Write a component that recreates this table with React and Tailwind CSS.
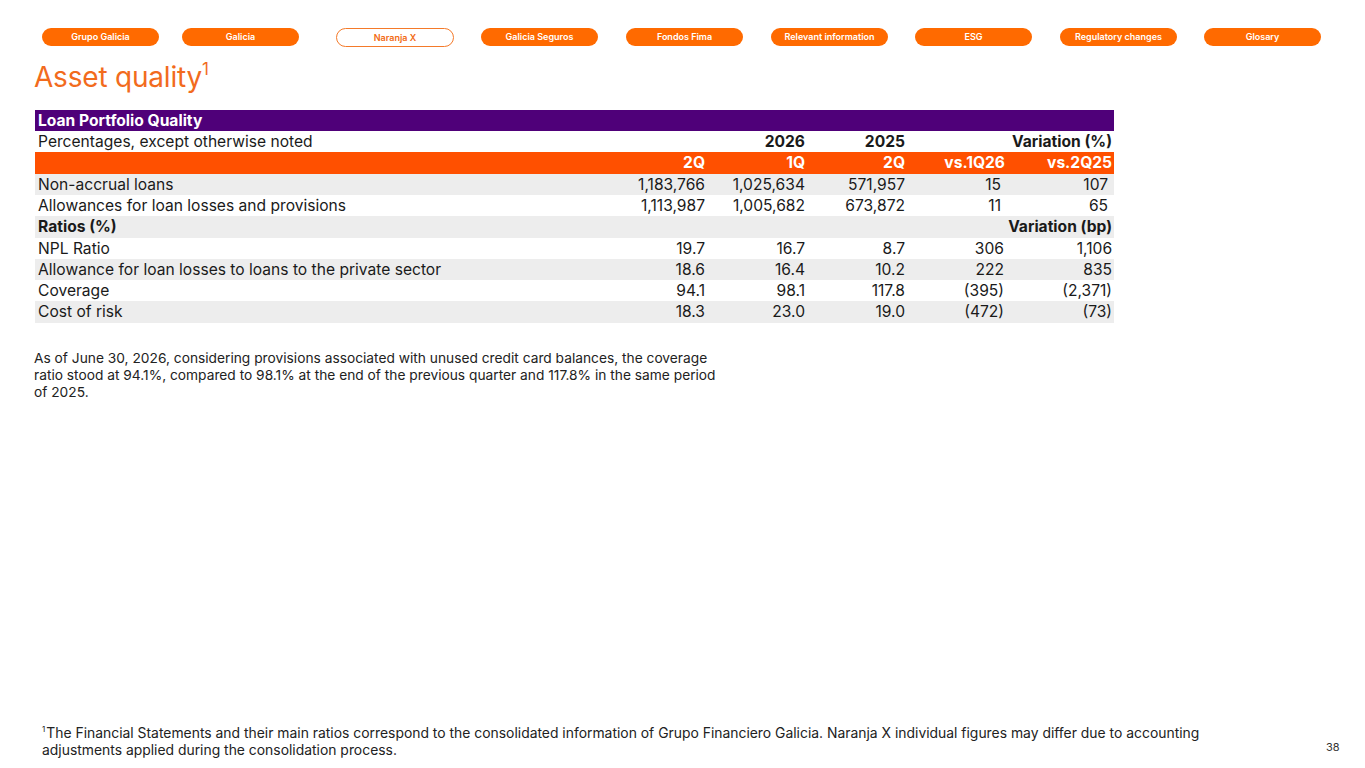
import React from "react";

const tabs = [
    { label: "Grupo Galicia", ml: "ml-[42px]" },
    { label: "Galicia", ml: "ml-[23px]" },
    { label: "Naranja X", ml: "ml-[37px]", active: true },
    { label: "Galicia Seguros", ml: "ml-[27px]" },
    { label: "Fondos Fima", ml: "ml-[28px]" },
    { label: "Relevant information", ml: "ml-[28px]" },
    { label: "ESG", ml: "ml-[27px]" },
    { label: "Regulatory changes", ml: "ml-[28px]" },
    { label: "Glosary", ml: "ml-[27px]" },
];

const rows = [
    { label: "Non-accrual loans", vals: ["1,183,766", "1,025,634", "571,957", "15", "107"], shade: true, pad: true },
    { label: "Allowances for loan losses and provisions", vals: ["1,113,987", "1,005,682", "673,872", "11", "65"], pad: true },
    { label: "Ratios (%)", bold: true, shade: true, right: "Variation (bp)" },
    { label: "NPL Ratio", vals: ["19.7", "16.7", "8.7", "306", "1,106"] },
    { label: "Allowance for loan losses to loans to the private sector", vals: ["18.6", "16.4", "10.2", "222", "835"], shade: true },
    { label: "Coverage", vals: ["94.1", "98.1", "117.8", "(395)", "(2,371)"] },
    { label: "Cost of risk", vals: ["18.3", "23.0", "19.0", "(472)", "(73)"], shade: true },
];

const App = () => {
    return (
        <div className="relative w-[1365px] h-[768px] bg-white overflow-hidden text-[#1a1a1a]" style={{ fontFamily: "Inter, 'Liberation Sans', sans-serif" }}>
            {/* nav pills */}
            <div className="flex pt-[28px]">
                {tabs.map((t) =>
                    t.active ? (
                        <div key={t.label} className={t.ml + " w-[118px] h-[19px] rounded-full border border-[#f47a2a] bg-white text-[#f26a12] text-[9px] font-semibold flex items-center justify-center"}>
                            {t.label}
                        </div>
                    ) : (
                        <div key={t.label} className={t.ml + " w-[117px] h-[18px] rounded-full bg-[#ff6a00] text-white text-[9px] font-semibold flex items-center justify-center"}>
                            {t.label}
                        </div>
                    )
                )}
            </div>

            {/* title */}
            <h1 className="ml-[34px] mt-[13px] text-[28px] leading-[34px] text-[#f26b1d] font-normal tracking-[-0.2px]">
                Asset quality<span className="inline-block align-top text-[17px] leading-[17px] mt-[1px]">1</span>
            </h1>

            {/* table */}
            <table className="ml-[35px] mt-[16px] w-[1079px] border-collapse text-[15.6px] leading-[21.2px] table-fixed">
                <colgroup>
                    <col className="w-[570px]" />
                    <col className="w-[100px]" />
                    <col className="w-[100px]" />
                    <col className="w-[100px]" />
                    <col className="w-[100px]" />
                    <col className="w-[109px]" />
                </colgroup>
                <tbody>
                    <tr className="bg-[#4f0079] text-white font-bold h-[21px]">
                        <td className="pl-[3px]" colSpan={6}>Loan Portfolio Quality</td>
                    </tr>
                    <tr className="h-[21px]">
                        <td className="pl-[3px]">Percentages, except otherwise noted</td>
                        <td></td>
                        <td className="text-right font-bold">2026</td>
                        <td className="text-right font-bold">2025</td>
                        <td className="text-right font-bold pr-[2px]" colSpan={2}>Variation (%)</td>
                    </tr>
                    <tr className="bg-[#ff5000] text-white font-bold h-[21px]">
                        <td></td>
                        <td className="text-right">2Q</td>
                        <td className="text-right">1Q</td>
                        <td className="text-right">2Q</td>
                        <td className="text-right">vs.1Q26</td>
                        <td className="text-right pr-[2px]">vs.2Q25</td>
                    </tr>
                    {rows.map((r) => (
                        <tr key={r.label} className={(r.shade ? "bg-[#ededed] " : "") + "h-[21.3px]"}>
                            <td className={"pl-[3px] " + (r.bold ? "font-bold" : "")}>{r.label}</td>
                            {r.right ? (
                                <td className="text-right font-bold pr-[2px]" colSpan={5}>{r.right}</td>
                            ) : (
                                r.vals.map((v, i) => (
                                    <td key={i} className={"text-right " + (i === 3 ? (r.pad ? "pr-[4px]" : "pr-[1px]") : i === 4 ? (r.pad ? "pr-[6px]" : "pr-[2px]") : "")}>
                                        {v}
                                    </td>
                                ))
                            )}
                        </tr>
                    ))}
                </tbody>
            </table>

            {/* note */}
            <p className="ml-[34px] mt-[27px] w-[690px] text-[13.75px] leading-[17px] text-[#222]">
                As of June 30, 2026, considering provisions associated with unused credit card balances, the coverage ratio stood at 94.1%, compared to 98.1% at the end of the previous quarter and 117.8% in the same period of 2025.
            </p>

            {/* footnote */}
            <div className="absolute left-[42px] top-[725px] w-[1160px] text-[13.9px] leading-[17px] text-[#222]">
                <span className="inline-block align-top text-[8px] leading-[9px] mr-[1px]">1</span>The Financial Statements and their main ratios correspond to the consolidated information of Grupo Financiero Galicia. Naranja X individual figures may differ due to accounting adjustments applied during the consolidation process.
            </div>
            <div className="absolute left-[1326px] top-[739px] text-[11px] text-[#333]">38</div>
        </div>
    );
};

export default App;
